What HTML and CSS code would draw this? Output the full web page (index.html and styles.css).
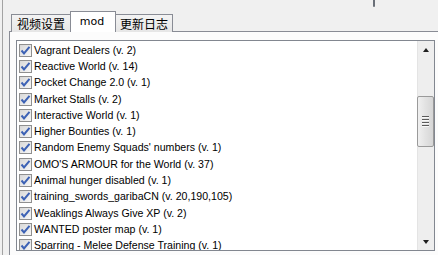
FILE: index.html
```html
<!DOCTYPE html>
<html>
<head>
<meta charset="utf-8">
<link rel="stylesheet" href="styles.css">
</head>
<body>
<div class="frame">
  <div class="mark"></div>
  <div class="tabs">
    <div class="tab tab-first">视频设置</div>
    <div class="tab tab-active">mod</div>
    <div class="tab tab-last">更新日志</div>
  </div>
  <div class="pane">
    <div class="listbox">
      <div class="list">
        <div class="row"><span class="cb"></span><span class="label">Vagrant Dealers (v. 2)</span></div>
        <div class="row"><span class="cb"></span><span class="label">Reactive World (v. 14)</span></div>
        <div class="row"><span class="cb"></span><span class="label">Pocket Change 2.0 (v. 1)</span></div>
        <div class="row"><span class="cb"></span><span class="label">Market Stalls (v. 2)</span></div>
        <div class="row"><span class="cb"></span><span class="label">Interactive World (v. 1)</span></div>
        <div class="row"><span class="cb"></span><span class="label">Higher Bounties (v. 1)</span></div>
        <div class="row"><span class="cb"></span><span class="label">Random Enemy Squads' numbers (v. 1)</span></div>
        <div class="row"><span class="cb"></span><span class="label">OMO'S ARMOUR for the World (v. 37)</span></div>
        <div class="row"><span class="cb"></span><span class="label">Animal hunger disabled (v. 1)</span></div>
        <div class="row"><span class="cb"></span><span class="label">training_swords_garibaCN (v. 20,190,105)</span></div>
        <div class="row"><span class="cb"></span><span class="label">Weaklings Always Give XP (v. 2)</span></div>
        <div class="row"><span class="cb"></span><span class="label">WANTED poster map (v. 1)</span></div>
        <div class="row"><span class="cb"></span><span class="label">Sparring - Melee Defense Training (v. 1)</span></div>
      </div>
      <div class="scrollbar">
        <div class="sb-btn"><span class="arrow-up"></span></div>
        <div class="sb-track">
          <div class="sb-gap-top"></div>
          <div class="sb-thumb"><span class="grip"></span><span class="grip"></span><span class="grip"></span><span class="grip"></span></div>
        </div>
        <div class="sb-btn"><span class="arrow-down"></span></div>
      </div>
    </div>
  </div>
</div>
</body>
</html>
```

FILE: styles.css
```css
html, body {
  margin: 0;
  padding: 0;
  background: #f0f0f0;
  overflow: hidden;
}
body {
  width: 438px;
  height: 255px;
  padding-left: 2px;
  box-sizing: border-box;
  font-family: "Liberation Sans", Arial, sans-serif;
}
.frame {
  position: relative;
  height: 255px;
  border-left: 1px solid #a3a3a3;
  padding: 12px 0 0 6px;
  box-sizing: border-box;
}
.mark {
  position: absolute;
  left: 370px;
  top: 0;
  width: 2px;
  height: 7px;
  background: #6a6f78;
  border-radius: 0 0 1px 1px;
}
.tabs {
  display: flex;
  align-items: flex-end;
  height: 20px;
  padding-left: 2px;
  position: relative;
  z-index: 2;
  margin-bottom: -1px;
}
.tab {
  height: 18px;
  box-sizing: border-box;
  border: 1px solid #898c95;
  border-bottom: none;
  background: linear-gradient(#f3f3f3, #e6e6e6);
  font-family: "Noto Sans CJK SC", sans-serif;
  font-size: 12px;
  line-height: 17px;
  color: #000;
  display: flex;
  justify-content: center;
}
.tab-first {
  width: 59px;
  border-right: none;
}
.tab-active {
  width: 46px;
  height: 21px;
  background: #fff;
  font-family: "DejaVu Sans", sans-serif;
  font-size: 11px;
  line-height: 19px;
  padding-right: 2px;
}
.tab-last {
  width: 57px;
  border-left: none;
}
.pane {
  border-top: 1px solid #898c95;
  border-left: 1px solid #898c95;
  background: #fcfcfc;
  padding: 8px 0 0 6px;
  height: 230px;
  box-sizing: border-box;
}
.listbox {
  width: 419px;
  height: 211px;
  box-sizing: border-box;
  border: 1px solid #828790;
  background: #fff;
  display: flex;
  overflow: hidden;
}
.list {
  flex: 1;
  padding: 1px 0 0 2px;
  overflow: hidden;
}
.row {
  height: 16.3px;
  display: flex;
  align-items: center;
  white-space: nowrap;
}
.cb {
  width: 13px;
  height: 13px;
  box-sizing: border-box;
  border: 1px solid #8f8f8f;
  background:
    url("data:image/svg+xml;utf8,<svg xmlns='http://www.w3.org/2000/svg' width='11' height='11'><path d='M1.5 5.5 L4 8.5 L9.5 1.8' fill='none' stroke='%233d62b5' stroke-width='2'/></svg>") no-repeat center,
    linear-gradient(135deg, #d8d8d8, #f7f7f7);
  flex: none;
}
.label {
  margin-left: 2px;
  font-size: 10.6px;
  line-height: 13px;
  color: #000;
}
.scrollbar {
  width: 17px;
  flex: none;
  display: flex;
  flex-direction: column;
  background: #eeeeee;
  border-left: 1px solid #e4e4e4;
  box-sizing: border-box;
}
.sb-btn {
  height: 17px;
  flex: none;
  display: flex;
  align-items: center;
  justify-content: center;
}
.arrow-up {
  width: 0;
  height: 0;
  border-left: 3.5px solid transparent;
  border-right: 3.5px solid transparent;
  border-bottom: 4px solid #1f1f1f;
}
.arrow-down {
  width: 0;
  height: 0;
  border-left: 3.5px solid transparent;
  border-right: 3.5px solid transparent;
  border-top: 4px solid #1f1f1f;
}
.sb-track {
  flex: 1;
  display: flex;
  flex-direction: column;
}
.sb-gap-top {
  height: 38px;
}
.sb-thumb {
  height: 51px;
  margin: 0 0 0 -1px;
  box-sizing: border-box;
  border: 1px solid #9a9a9a;
  border-radius: 2px;
  background: linear-gradient(90deg, #f0f0f0, #e2e2e2 50%, #d6d6d6);
  display: flex;
  flex-direction: column;
  align-items: center;
  justify-content: center;
  gap: 1px;
}
.grip {
  width: 7px;
  height: 1px;
  background: #5a5a5a;
  border-bottom: 1px solid #f8f8f8;
}
```
